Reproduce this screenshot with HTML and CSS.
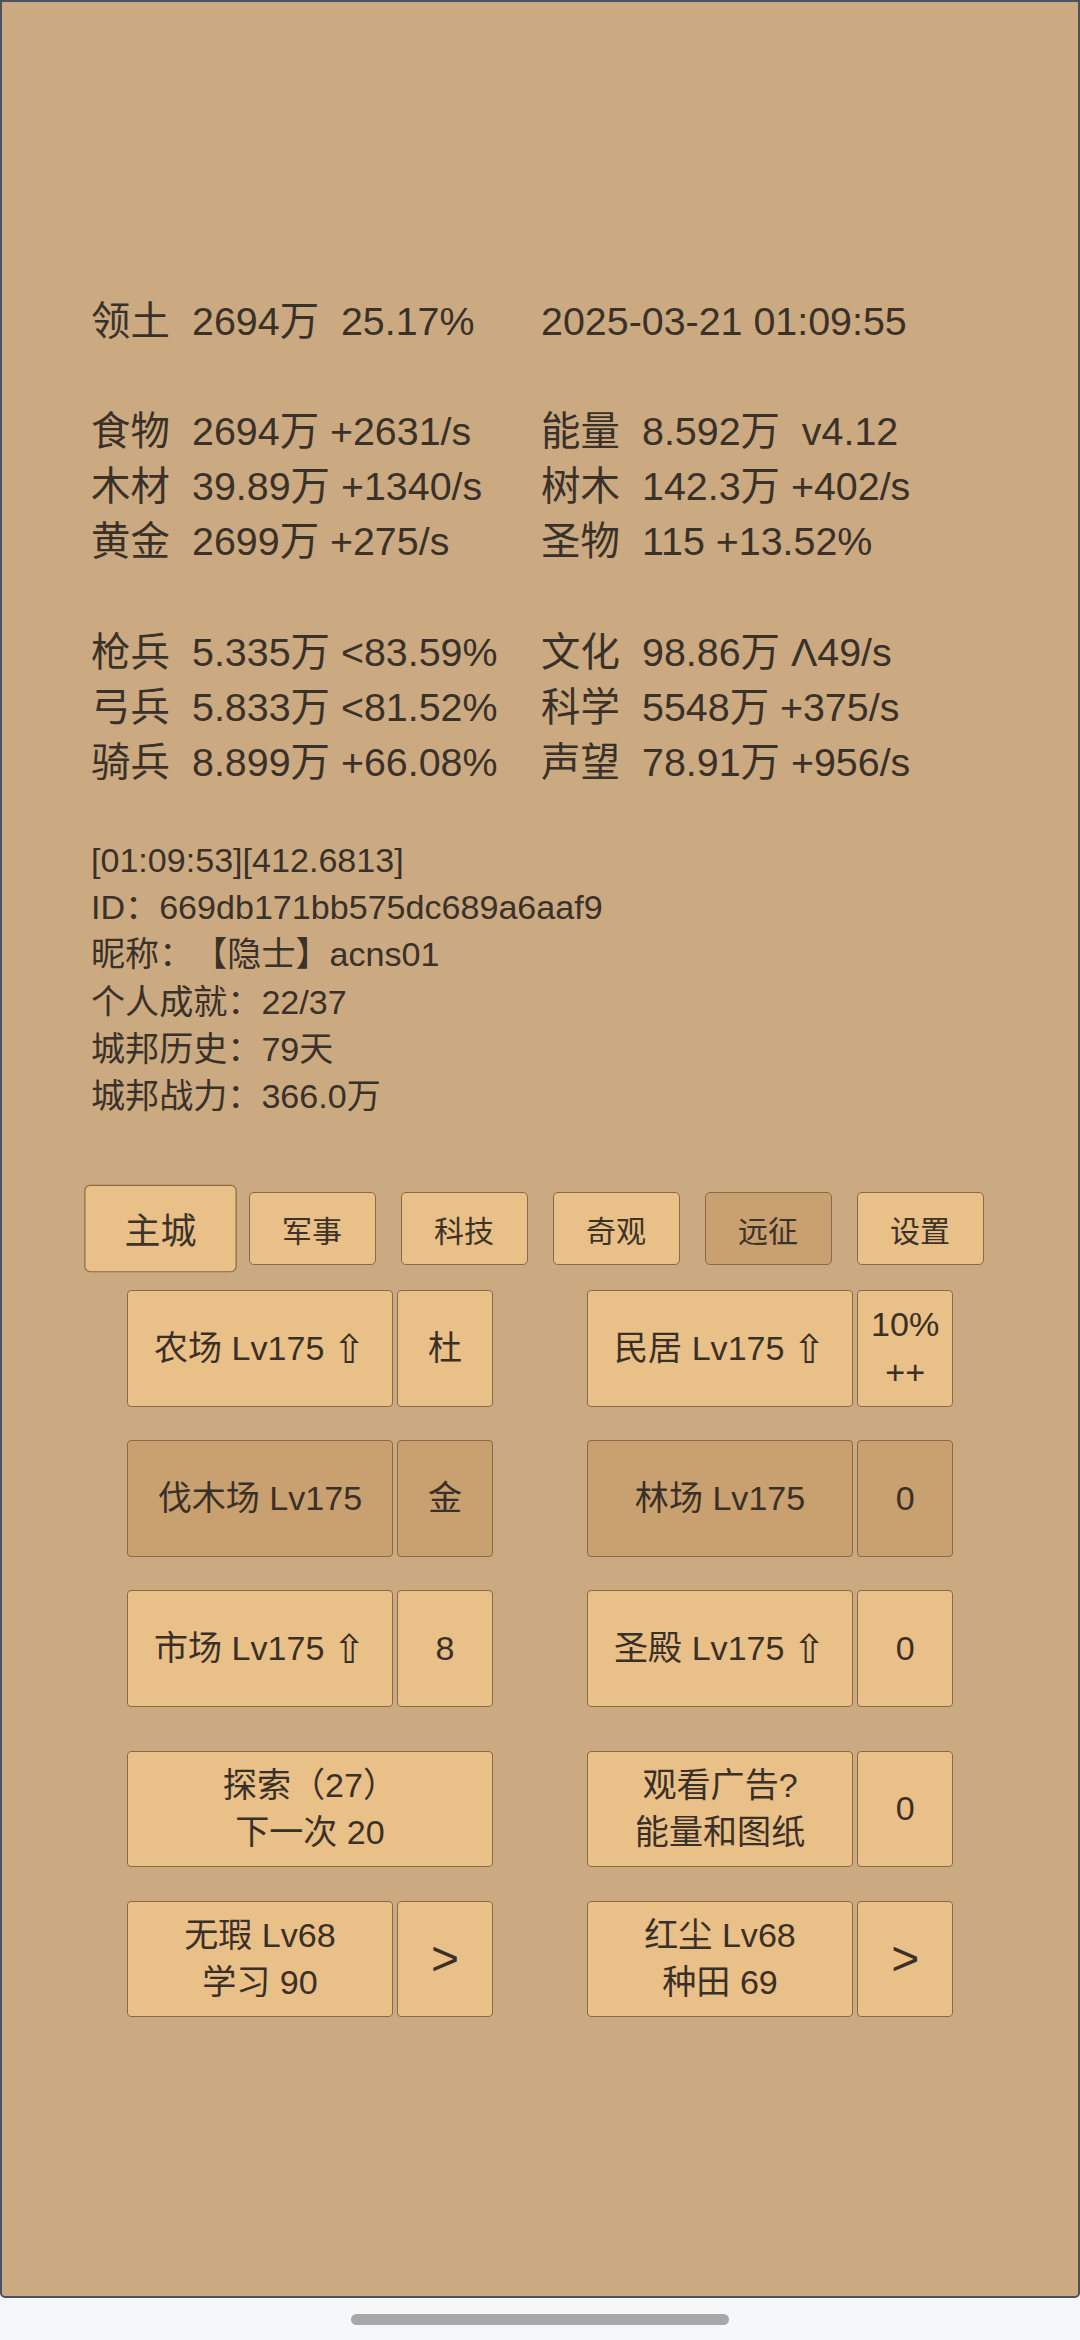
FILE: index.html
```html
<!DOCTYPE html>
<html lang="zh-CN">
<head>
<meta charset="utf-8">
<title>城邦</title>
<link rel="stylesheet" href="styles.css">
</head>
<body>
<div class="screen">
  <div class="frame">
    <div class="stats">
      <div class="cell"><span class="lbl">领土</span><span class="val">2694万  25.17%</span></div>
      <div class="cell"><span class="val">2025-03-21 01:09:55</span></div>
      <div class="blank"></div>
      <div class="cell"><span class="lbl">食物</span><span class="val">2694万 +2631/s</span></div>
      <div class="cell"><span class="lbl">能量</span><span class="val">8.592万  v4.12</span></div>
      <div class="cell"><span class="lbl">木材</span><span class="val">39.89万 +1340/s</span></div>
      <div class="cell"><span class="lbl">树木</span><span class="val">142.3万 +402/s</span></div>
      <div class="cell"><span class="lbl">黄金</span><span class="val">2699万 +275/s</span></div>
      <div class="cell"><span class="lbl">圣物</span><span class="val">115 +13.52%</span></div>
      <div class="blank"></div>
      <div class="cell"><span class="lbl">枪兵</span><span class="val">5.335万 &lt;83.59%</span></div>
      <div class="cell"><span class="lbl">文化</span><span class="val">98.86万 Λ49/s</span></div>
      <div class="cell"><span class="lbl">弓兵</span><span class="val">5.833万 &lt;81.52%</span></div>
      <div class="cell"><span class="lbl">科学</span><span class="val">5548万 +375/s</span></div>
      <div class="cell"><span class="lbl">骑兵</span><span class="val">8.899万 +66.08%</span></div>
      <div class="cell"><span class="lbl">声望</span><span class="val">78.91万 +956/s</span></div>
    </div>

    <div class="info">
      <div>[01:09:53][412.6813]</div>
      <div>ID：669db171bb575dc689a6aaf9</div>
      <div>昵称：【隐士】acns01</div>
      <div>个人成就：22/37</div>
      <div>城邦历史：79天</div>
      <div>城邦战力：366.0万</div>
    </div>

    <div class="tabs">
      <div class="tab active">主城</div>
      <div class="tab">军事</div>
      <div class="tab">科技</div>
      <div class="tab">奇观</div>
      <div class="tab dim">远征</div>
      <div class="tab">设置</div>
    </div>

    <div class="board">
      <div class="brow">
        <div class="pair">
          <div class="btn main">农场 Lv175 <span class="up">⇧</span></div>
          <div class="btn side">杜</div>
        </div>
        <div class="pair">
          <div class="btn main">民居 Lv175 <span class="up">⇧</span></div>
          <div class="btn side two">10%<br>++</div>
        </div>
      </div>
      <div class="brow">
        <div class="pair">
          <div class="btn main dim">伐木场 Lv175</div>
          <div class="btn side dim">金</div>
        </div>
        <div class="pair">
          <div class="btn main dim">林场 Lv175</div>
          <div class="btn side dim">0</div>
        </div>
      </div>
      <div class="brow">
        <div class="pair">
          <div class="btn main">市场 Lv175 <span class="up">⇧</span></div>
          <div class="btn side">8</div>
        </div>
        <div class="pair">
          <div class="btn main">圣殿 Lv175 <span class="up">⇧</span></div>
          <div class="btn side">0</div>
        </div>
      </div>
      <div class="brow extra">
        <div class="pair">
          <div class="btn wide two">探索（27）<br>下一次 20</div>
        </div>
        <div class="pair">
          <div class="btn main two">观看广告?<br>能量和图纸</div>
          <div class="btn side">0</div>
        </div>
      </div>
      <div class="brow">
        <div class="pair">
          <div class="btn main two">无瑕 Lv68<br>学习 90</div>
          <div class="btn side arrow">&gt;</div>
        </div>
        <div class="pair">
          <div class="btn main two">红尘 Lv68<br>种田 69</div>
          <div class="btn side arrow">&gt;</div>
        </div>
      </div>
    </div>
  </div>
  <div class="navbar"><div class="handle"></div></div>
</div>
</body>
</html>
```

FILE: styles.css
```css
html, body {
  margin: 0;
  padding: 0;
}

body {
  background: #f6f7f9;
  font-family: "Liberation Sans", "Noto Sans CJK SC", sans-serif;
  color: #3a3129;
  text-spacing-trim: space-all;
}

.screen {
  width: 1080px;
  height: 2340px;
  display: flex;
  flex-direction: column;
}

.frame {
  box-sizing: border-box;
  height: 2298px;
  background: #cbaa82;
  border: 2px solid #4a5262;
  border-radius: 0 0 5px 5px;
  padding: 292px 0 0 89px;
}

/* ---------- resource stats ---------- */
.stats {
  display: grid;
  grid-template-columns: 450px 450px;
  font-size: 39.4px;
  line-height: 55.1px;
}

.blank {
  grid-column: 1 / 3;
  height: 55.1px;
}

.cell {
  display: flex;
  white-space: pre;
}

.lbl {
  width: 101px;
  flex: none;
}

.val {
  white-space: pre;
}

/* ---------- player info ---------- */
.info {
  margin-top: 47px;
  font-size: 34.1px;
  line-height: 47.25px;
}

/* ---------- tab bar ---------- */
.tabs {
  margin: 72px 0 0 -89px;
  width: 1076px;
  display: flex;
  justify-content: center;
  gap: 25px;
}

.tab {
  box-sizing: border-box;
  width: 127px;
  height: 72.6px;
  display: flex;
  align-items: center;
  justify-content: center;
  background: #e9c087;
  border: 1.5px solid #8a6a44;
  border-radius: 5px;
  font-size: 30px;
  color: #3d3329;
}

.tab.active {
  transform: scale(1.2);
}

.tab.dim {
  background: #c9a06f;
}

/* ---------- building buttons ---------- */
.board {
  margin: 25.4px 0 0 -89px;
  width: 1076px;
  display: flex;
  flex-direction: column;
  gap: 33.5px;
}

.brow {
  display: flex;
  justify-content: center;
  gap: 93.3px;
}

.brow.extra {
  margin-top: 10.3px;
}

.pair {
  display: flex;
  gap: 3.5px;
  width: 366.8px;
}

.btn {
  box-sizing: border-box;
  height: 116.5px;
  display: flex;
  align-items: center;
  justify-content: center;
  text-align: center;
  background: #e9c087;
  border: 1.5px solid #8a6a44;
  border-radius: 4px;
  font-size: 34.1px;
  line-height: 47.25px;
  color: #3a3028;
  white-space: nowrap;
}

.btn.main {
  width: 266.8px;
}

.btn.side {
  width: 96.5px;
}

.btn.wide {
  width: 366.8px;
}

.btn.dim {
  background: #c9a06f;
}

.btn.arrow {
  font-size: 48px;
}

.up {
  font-family: "DejaVu Sans", sans-serif;
  font-size: 40px;
  line-height: 1;
  margin-left: 8px;
}

/* ---------- system nav ---------- */
.navbar {
  flex: 1;
  display: flex;
  justify-content: center;
  padding-top: 16px;
}

.handle {
  width: 378px;
  height: 11px;
  border-radius: 6px;
  background: #a8a8a8;
}
```
